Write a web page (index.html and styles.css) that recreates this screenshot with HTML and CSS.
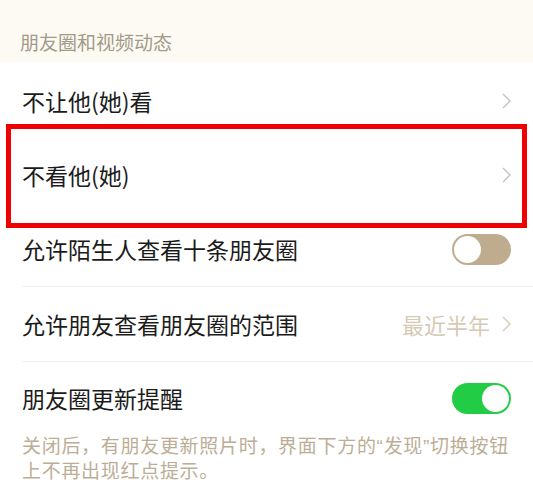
FILE: index.html
```html
<!DOCTYPE html>
<html lang="zh-CN">
<head>
    <meta charset="UTF-8">
    <meta name="viewport" content="width=device-width, initial-scale=1.0">
    <title>朋友圈和视频动态</title>
    <link rel="stylesheet" href="styles.css">
</head>
<body>
    <div class="section-title">朋友圈和视频动态</div>

    <div class="list">
        <div class="row">
            <span class="label">不让他(她)看</span>
            <svg class="chevron" width="9" height="16" viewBox="0 0 9 16"><polyline points="1,1 8,8 1,15" fill="none" stroke="#c2c2c2" stroke-width="1.4"/></svg>
        </div>
        <div class="row">
            <span class="label">不看他(她)</span>
            <svg class="chevron" width="9" height="16" viewBox="0 0 9 16"><polyline points="1,1 8,8 1,15" fill="none" stroke="#c2c2c2" stroke-width="1.4"/></svg>
        </div>
        <div class="row divided">
            <span class="label">允许陌生人查看十条朋友圈</span>
            <span class="switch"></span>
        </div>
        <div class="row divided">
            <span class="label">允许朋友查看朋友圈的范围</span>
            <span class="value">
                最近半年
                <svg class="chevron" width="9" height="16" viewBox="0 0 9 16"><polyline points="1,1 8,8 1,15" fill="none" stroke="#d6cab5" stroke-width="1.4"/></svg>
            </span>
        </div>
        <div class="row last">
            <span class="label">朋友圈更新提醒</span>
            <span class="switch on"></span>
        </div>
    </div>

    <p class="note">关闭后，有朋友更新照片时，界面下方的“发现”切换按钮<br>上不再出现红点提示。</p>

    <div class="highlight"></div>
</body>
</html>
```

FILE: styles.css
```css
body {
    margin: 0;
    background-color: #ffffff;
    font-family: "Noto Sans CJK SC", "Noto Sans", sans-serif;
    position: relative;
}

.section-title {
    height: 62px;
    box-sizing: border-box;
    padding: 20px 20px 0;
    display: flex;
    align-items: center;
    background-color: #fcfaf3;
    color: #a39b89;
    font-size: 19px;
}

.row {
    height: 75px;
    box-sizing: border-box;
    margin-left: 22px;
    padding-right: 22px;
    display: flex;
    align-items: center;
    justify-content: space-between;
}

.row:first-child {
    padding-top: 3px;
}

.row.divided {
    border-bottom: 1px solid #f1f0ee;
}

.row.last {
    height: 72px;
}

.label {
    font-size: 23px;
    color: #1b1b1b;
}

.value {
    display: flex;
    align-items: center;
    gap: 12px;
    font-size: 22px;
    color: #d6cab5;
}

.chevron {
    display: block;
}

.switch {
    position: relative;
    width: 59px;
    height: 31px;
    border-radius: 16px;
    background-color: #bfac8f;
}

.switch::after {
    content: "";
    position: absolute;
    top: 2px;
    left: 2px;
    width: 27px;
    height: 27px;
    border-radius: 50%;
    background-color: #ffffff;
}

.switch.on {
    background-color: #22cd45;
}

.switch.on::after {
    left: 30px;
}

.note {
    margin: 0;
    padding: 0 8px 0 22px;
    font-family: "Liberation Sans", "Noto Sans CJK SC", sans-serif;
    font-size: 19px;
    line-height: 25px;
    letter-spacing: 0.7px;
    color: #bcae96;
}

.highlight {
    position: absolute;
    top: 124px;
    left: 6px;
    width: 521px;
    height: 104px;
    box-sizing: border-box;
    border: 5px solid #f00000;
}
```
